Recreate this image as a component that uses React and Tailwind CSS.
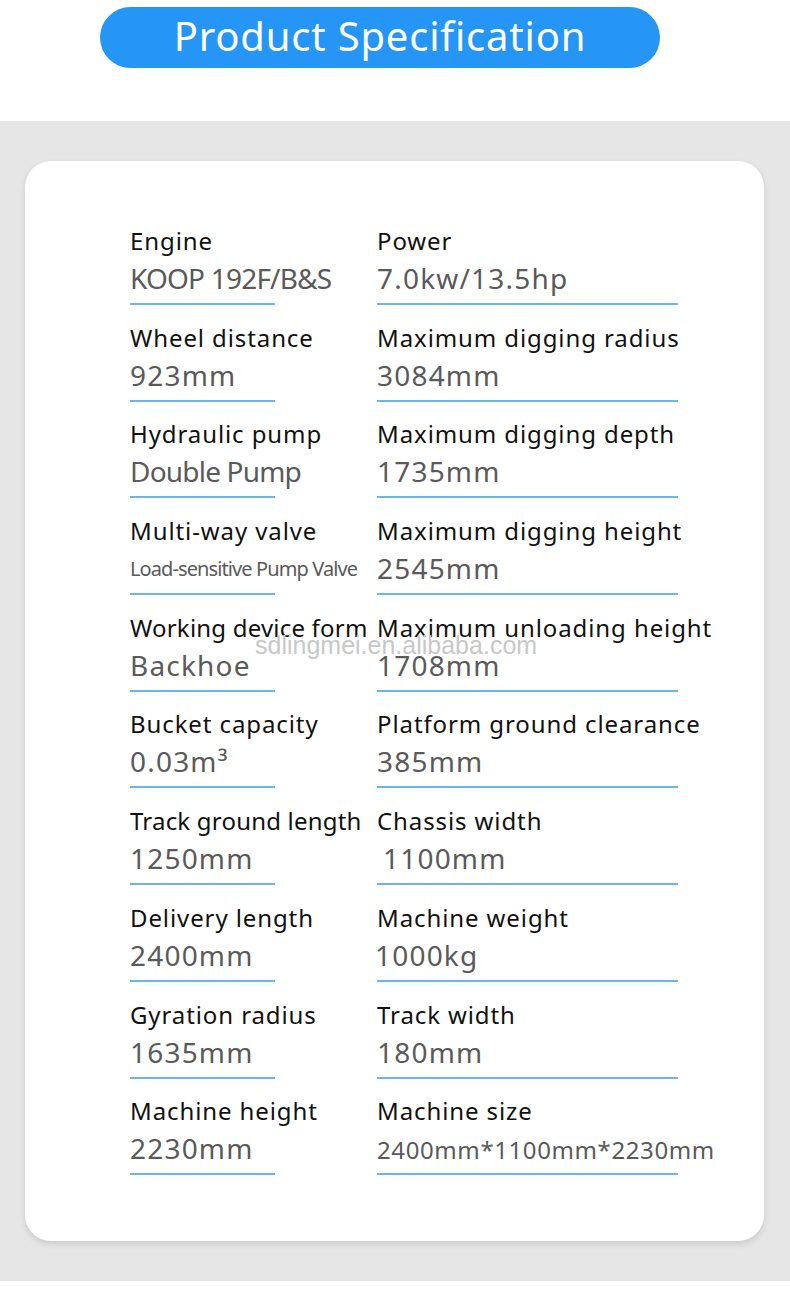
import React from 'react';

// spec rows: [left label, left value, right label, right value]
const specs = [
  {l: 'Engine', lv: 'KOOP 192F/B&S', r: 'Power', rv: '7.0kw/13.5hp', lvKoop: true},
  {l: 'Wheel distance', lv: '923mm', r: 'Maximum digging radius', rv: '3084mm'},
  {l: 'Hydraulic pump', lv: 'Double Pump', r: 'Maximum digging depth', rv: '1735mm', lvTight: true},
  {l: 'Multi-way valve', lv: 'Load-sensitive Pump Valve', r: 'Maximum digging height', rv: '2545mm', lvSmall: true},
  {l: 'Working device form', lv: 'Backhoe', r: 'Maximum unloading height', rv: '1708mm', lTight: true},
  {l: 'Bucket capacity', lv: '0.03m³', r: 'Platform ground clearance', rv: '385mm'},
  {l: 'Track ground length', lv: '1250mm', r: 'Chassis width', rv: '1100mm', lTight: true, rvShift: 'pl-[6px]'},
  {l: 'Delivery length', lv: '2400mm', r: 'Machine weight', rv: '1000kg', rvShift: '-ml-[2px]'},
  {l: 'Gyration radius', lv: '1635mm', r: 'Track width', rv: '180mm'},
  {l: 'Machine height', lv: '2230mm', r: 'Machine size', rv: '2400mm*1100mm*2230mm', rvSmall: true},
];

function SpecCell(props) {
  let label_style = "text-[24px] leading-[30px] text-[#111] whitespace-nowrap";
  if (props.tight) label_style += " tracking-[0.2px]";
  else label_style += " tracking-[0.9px]";

  let value_style = "h-[36px] mt-[4px] text-[28px] leading-[36px] text-[#5a5a5a] whitespace-nowrap";
  if (props.small) value_style += " text-[20px]! leading-[38px]! tracking-[-0.9px]";
  else if (props.medium) value_style += " text-[24px]! leading-[40px]! tracking-[0.6px]";
  else if (props.koop) value_style += " tracking-[-0.8px]";
  else if (props.tightValue) value_style += " tracking-[-0.8px]";
  else value_style += " tracking-[1.2px]";
  if (props.shift) value_style += " " + props.shift;

  return (
    <div className="flex flex-col">
      <div className={label_style}>{props.label}</div>
      <div className={value_style}>{props.value}</div>
      <div className={"mt-[7px] h-[2px] bg-[#6cb4ec] " + props.lineW}></div>
    </div>
  );
}

export default function App() {
  return (
    <div className="w-[790px] bg-white" style={{fontFamily: '"Noto Sans", "Open Sans", sans-serif'}}>
      <div className="h-[121px] pt-[7px]">
        <div className="ml-[100px] w-[560px] h-[61px] rounded-full bg-[#2595f6] flex items-center justify-center">
          <span className="text-[40px] leading-none text-white tracking-[0.8px] pb-[3px]">Product Specification</span>
        </div>
      </div>

      <div className="bg-[#e6e6e6] pt-[40px] pb-[40px] pl-[25px] pr-[26px]">
        <div className="relative h-[1080px] bg-white rounded-[26px] shadow-[0_3px_6px_rgba(0,0,0,0.12)] pt-[65px] pl-[105px]">
          {specs.map((s, i) => (
            <div key={i} className="h-[96.7px] grid grid-cols-[247px_320px]">
              <SpecCell label={s.l} value={s.lv} lineW="w-[145px]" tight={s.lTight} small={s.lvSmall} tightValue={s.lvTight} koop={s.lvKoop} />
              <SpecCell label={s.r} value={s.rv} lineW="w-[301px]" medium={s.rvSmall} shift={s.rvShift} />
            </div>
          ))}
          <div className="absolute left-[230px] top-[466px] text-[25px] text-[#c8c8c8] whitespace-nowrap" style={{fontFamily: '"Liberation Sans", Arial, sans-serif'}}>
            sdlingmei.en.alibaba.com
          </div>
        </div>
      </div>
      <div className="h-[10px] bg-white"></div>
    </div>
  );
}
